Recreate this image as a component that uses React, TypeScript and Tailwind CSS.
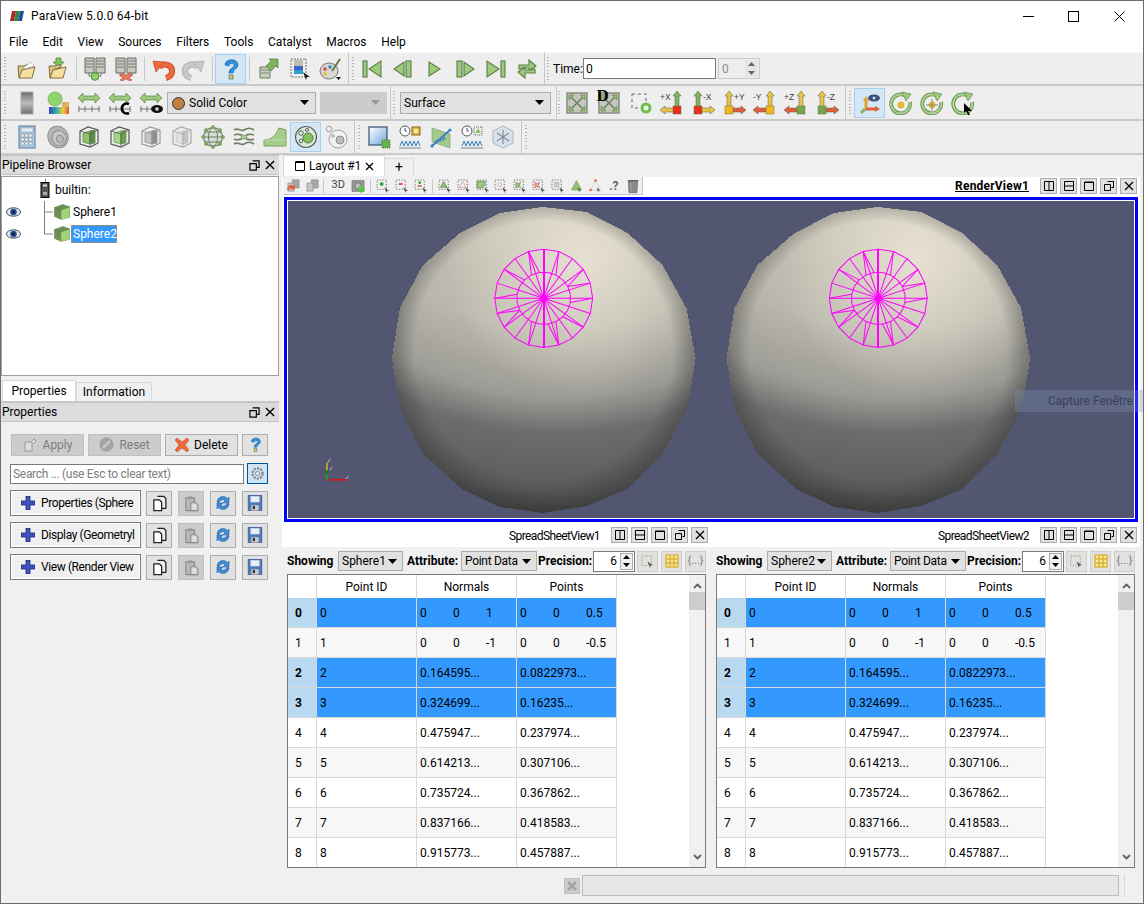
import React from 'react';

const G = '#9ccb80';
const GD = '#5e7d45';

const I = ({ s = 24, children }: { s?: number; children: React.ReactNode }) => (
  <svg width={s} height={s} viewBox="0 0 24 24" className="block shrink-0">{children}</svg>
);

const Folder = ({ down }: { down?: boolean }) => (
  <I>
    {down && <path d="M10 1h5v4h3l-5.500 5L7 5h3z" fill="#7fc25f" stroke="#4f8a38" strokeWidth="0.800" />}
    <path d="M3 9h6l2-1h4v2l-8 3-2 8H4z" fill="#d9c48a" stroke="#7d6a3a" />
    <path d="M7 13l13-3-3 11H4z" fill="#f7df9f" stroke="#86703c" />
    {!down && <path d="M8 11l8-6 3 4-9 3z" fill="#fff" stroke="#999" strokeWidth="0.600" />}
  </I>
);

const Servers = ({ bad }: { bad?: boolean }) => (
  <I>
    <path d="M2 1h9v15H2zM13 1h9v15h-9z" fill="#c9c9c2" stroke="#666" />
    <path d="M3 4h7M3 7h7M3 10h7M14 4h7M14 7h7M14 10h7" stroke="#787c70" strokeWidth="1.200" />
    <path d="M6 16v3h5M18 16v3h-5" stroke="#777" fill="none" />
    {bad ? (
      <path d="M8 16l4 2 4-2 2 2-3 3 3 2-2 1-4-2-4 2-2-1 3-2-3-3z" fill="#e9775b" stroke="#b04a30" strokeWidth="0.600" />
    ) : (
      <circle cx="12" cy="19.500" r="3.800" fill="#8fd46c" stroke="#4f8a38" />
    )}
  </I>
);

const Curl = ({ c, d, flip }: { c: string; d: string; flip?: boolean }) => (
  <I>
    <g transform={flip ? 'translate(24 0) scale(-1 1)' : ''}>
      <path d="M8 10c4-4 12-3 13 3 .5 4-2 7-6 8" fill="none" stroke={d} strokeWidth="6" />
      <path d="M8 10c4-4 12-3 13 3 .5 4-2 7-6 8" fill="none" stroke={c} strokeWidth="4.400" />
      <path d="M2 4l11 1-8 10z" fill={c} stroke={d} strokeWidth="0.700" />
    </g>
  </I>
);

const Help = ({ s = 24 }: { s?: number }) => (
  <I s={s}>
    <path d="M6 8c0-7 13-7 13 0 0 4-5 4-5 8h-4c0-5 5-5 5-8 0-2-5-2-5 1z" fill="#2f8fdc" stroke="#1b5f9c" strokeWidth="0.600" />
    <rect x="10" y="18" width="4" height="4" fill="#f4c430" stroke="#1b5f9c" strokeWidth="0.600" />
  </I>
);

const Extract = () => (
  <I>
    <path d="M4 10h10v11H4z" fill="#c8cfbf" stroke="#5f7f55" />
    <path d="M5 13h8M5 16h8" stroke="#7d8d75" />
    <path d="M10 9l5-5-2-2h9v9l-2-2-5 5z" fill="#7fb35f" stroke="#4f7a3a" strokeWidth="0.700" />
  </I>
);

const ColorMap = () => (
  <I>
    <rect x="4" y="2" width="15" height="18" fill="none" stroke="#777" strokeDasharray="2 1" />
    <rect x="7" y="3" width="9" height="6" fill="#bdbdb2" />
    <rect x="7" y="9" width="9" height="4" fill="#3a63c9" />
    <rect x="7" y="13" width="9" height="4" fill="#2f9fcf" />
    <path d="M16 15l7 5-3 0-1 3z" fill="#222" />
  </I>
);

const Palette = () => (
  <I>
    <ellipse cx="11" cy="14" rx="9" ry="8" fill="#d8d8d0" stroke="#777" />
    <circle cx="7" cy="12" r="1.800" fill="#e2453c" />
    <circle cx="12" cy="10" r="1.800" fill="#3d7fd9" />
    <circle cx="7" cy="17" r="1.800" fill="#e8c331" />
    <path d="M14 14L22 2" stroke="#5e7d45" strokeWidth="2" />
    <path d="M18 20h5l-2.500 3z" fill="#111" />
  </I>
);

const Vcr = ({ k }: { k: string }) => {
  const p = { fill: G, stroke: GD, strokeWidth: 1.100 };
  return (
    <I>
      {k === 'first' && (<><rect x="3" y="4" width="4" height="16" {...p} /><path d="M21 4v16L9 12z" {...p} /></>)}
      {k === 'prev' && (<><path d="M13 5v14L3 12z" {...p} /><rect x="15" y="4" width="5" height="16" {...p} /></>)}
      {k === 'play' && <path d="M7 5v14l11-7z" {...p} />}
      {k === 'next' && (<><rect x="4" y="4" width="5" height="16" {...p} /><path d="M11 5v14l10-7z" {...p} /></>)}
      {k === 'last' && (<><path d="M3 4v16l12-8z" {...p} /><rect x="17" y="4" width="4" height="16" {...p} /></>)}
      {k === 'loop' && (
        <>
          <path d="M4 12V8h10V3l7 6-7 5v-3H7v1z" {...p} />
          <path d="M20 12v4H10v5l-7-6 7-5v3h7v-1z" {...p} />
        </>
      )}
    </I>
  );
};

const GradBar = () => (
  <I>
    <defs>
      <linearGradient id="gb" x1="0" y1="0" x2="0" y2="1"><stop offset="0" stopColor="#6c6c6c" /><stop offset="0.500" stopColor="#bdbdbd" /><stop offset="1" stopColor="#6f6f6f" /></linearGradient>
    </defs>
    <rect x="6" y="1" width="12" height="22" fill="url(#gb)" stroke="#aaa" />
  </I>
);

const ColorBall = () => (
  <I>
    <defs>
      <linearGradient id="rb" x1="0" y1="0" x2="1" y2="0"><stop offset="0" stopColor="#3146c9" /><stop offset="0.400" stopColor="#3db4a0" /><stop offset="0.700" stopColor="#e8cf3a" /><stop offset="1" stopColor="#e2543a" /></linearGradient>
    </defs>
    <circle cx="9" cy="8" r="7" fill="#8fd46c" stroke="#5e9a45" strokeWidth="0.600" />
    <rect x="3" y="16" width="20" height="7" fill="url(#rb)" />
    <rect x="16" y="11" width="7" height="5" fill="#d9b45f" />
  </I>
);

const Rescale = ({ k }: { k?: 'c' | 'eye' }) => (
  <I>
    <path d="M1 7l5-5v3h12V2l5 5-5 5V9H6v3z" fill={G} stroke={GD} strokeWidth="0.700" />
    <path d="M1 18h22M2 15v6M8 15v6M15 15v6M22 15v6" stroke="#777" fill="none" />
    {k === 'c' && <path d="M21 13a5 5 0 1 0 0 9" fill="none" stroke="#000" strokeWidth="2.600" />}
    {k === 'eye' && (<><ellipse cx="18" cy="18" rx="6" ry="4" fill="#111" /><circle cx="18" cy="18" r="1.800" fill="#ddd" /></>)}
  </I>
);

const ResetCam = ({ d }: { d?: boolean }) => (
  <div className="relative">
    <I>
      <rect x="2" y="2" width="20" height="20" fill="#c5c6bd" stroke="#8a8a82" strokeWidth="1.500" />
      <path d="M6 6l12 12M18 6L6 18" stroke="#6e7f64" strokeWidth="1.500" />
      <path d="M4 4h5l-5 5zM20 4v5l-5-5zM4 20v-5l5 5zM20 20h-5l5-5z" fill="#8ec46f" stroke="#5e7d45" strokeWidth="0.600" />
    </I>
    {d && <span className="absolute left-[0px] top-[-5px] text-[17px] leading-[20px] font-bold text-black [font-family:'Liberation_Serif',serif]">D</span>}
  </div>
);

const ZoomBox = () => (
  <I>
    <rect x="3" y="3" width="14" height="14" fill="none" stroke="#666" strokeDasharray="3 3" />
    <circle cx="17" cy="17" r="5.500" fill="#6fc04f" />
    <circle cx="17" cy="17" r="2.500" fill="#e9f7e0" />
  </I>
);

const Ax = ({ l, left, v, h, sq }: { l: string; left: boolean; v: string; h: string; sq: string }) => {
  const x = left ? 7 : 17;
  return (
    <I>
      <path d={`M${x} 0l4 5h-2v11h-4V5h-2z`} fill={v} stroke="#5a5a40" strokeWidth="0.500" />
      {left
        ? <path d="M10 17h9v-2l5 4-5 4v-2h-9z" fill={h} stroke="#5a5a40" strokeWidth="0.500" />
        : <path d="M14 17H5v-2l-5 4 5 4v-2h9z" fill={h} stroke="#5a5a40" strokeWidth="0.500" />}
      <rect x={x - 4} y="15" width="8" height="8" fill={sq} stroke="#7a6a30" strokeWidth="0.500" />
      <text x={left ? 12 : 0} y="9" fontSize="8.500" fill="#444" fontFamily="'Liberation Sans',sans-serif">{l}</text>
    </I>
  );
};

const EyeAxis = () => (
  <I>
    <path d="M8 9v10" stroke="#d9a62e" strokeWidth="3" />
    <path d="M8 5l3 5H5z" fill="#d9a62e" />
    <path d="M8 18h10" stroke="#e0603c" strokeWidth="3" />
    <path d="M22 18l-5 3v-6z" fill="#e0603c" />
    <path d="M7 18l-4 4" stroke="#7fb35f" strokeWidth="3" />
    <ellipse cx="16" cy="7" rx="6" ry="3.500" fill="#37517a" />
    <circle cx="16" cy="7" r="1.500" fill="#cfd8e8" />
  </I>
);

const Rot = ({ k }: { k: 'dot' | 'cross' | 'cursor' }) => (
  <I>
    <path d="M17 5a9.500 9.500 0 1 0 4 6" fill="none" stroke="#6f9a55" strokeWidth="3.800" />
    <path d="M17 5a9.500 9.500 0 1 0 4 6" fill="none" stroke="#b4d6a0" strokeWidth="1.600" />
    <path d="M13 1l9 2-5 7z" fill="#9ccb80" stroke="#5e7d45" strokeWidth="0.600" />
    {k !== 'cursor' && <circle cx="12" cy="14" r="3" fill="#f0c020" stroke="#b08c20" strokeWidth="0.500" />}
    {k === 'cross' && <path d="M12 8v12M6 14h12" stroke="#8a8a60" />}
    {k === 'cursor' && <path d="M13 12l8 8h-4l2 4-2 0-2-4-2 2z" fill="#000" />}
  </I>
);

const Calc = () => (
  <I>
    <rect x="4" y="1" width="16" height="22" fill="#a9c9e6" stroke="#63788c" />
    <rect x="6" y="3" width="12" height="4" fill="#e7eff6" stroke="#7d8fa0" strokeWidth="0.500" />
    {[6, 10, 14].map(x => [9, 13, 17].map(y => <rect key={x + '-' + y} x={x} y={y} width="3" height="3" fill="#f4f4f4" stroke="#63788c" strokeWidth="0.400" />))}
  </I>
);

const Contour = () => (
  <I>
    <ellipse cx="12" cy="12" rx="10" ry="11" fill="#b5b5b5" stroke="#8f8f8f" transform="rotate(-25 12 12)" />
    <ellipse cx="13" cy="13" rx="7" ry="7.500" fill="#c9c9c9" stroke="#8f8f8f" transform="rotate(-25 13 13)" />
    <ellipse cx="14" cy="14" rx="3.500" ry="4" fill="#b5b5b5" stroke="#8f8f8f" transform="rotate(-25 14 14)" />
  </I>
);

const Cube = ({ fill, shade, line }: { fill: string; shade: string; line: string }) => (
  <I>
    <path d="M3 6l8-4 10 3v13l-8 4-10-3z" fill="none" stroke={line} strokeWidth="1.200" />
    <path d="M6 8l7-2v13l-7-2z" fill={fill} stroke={shade} strokeWidth="0.800" />
    <path d="M13 6l5-1v13l-5 1z" fill={shade} stroke={shade} strokeWidth="0.800" />
    <path d="M3 6l10 3 8-4M13 9v13" fill="none" stroke={line} strokeWidth="0.800" />
  </I>
);

const Glyph = () => (
  <I>
    <circle cx="12" cy="12" r="9.500" fill="#d3dfd6" stroke="#6e7f64" strokeWidth="1.200" />
    <ellipse cx="12" cy="12" rx="4.500" ry="9.500" fill="none" stroke="#6e7f64" />
    <path d="M2.500 12h19M4 7h16M4 17h16" stroke="#6e7f64" />
    {[[12, 2], [12, 22], [2, 12], [22, 12], [5, 5], [19, 5], [5, 19], [19, 19]].map(([x, y]) => <circle key={x + '_' + y} cx={x} cy={y} r="1.600" fill="#7fb35f" stroke="#4f7a3a" strokeWidth="0.400" />)}
  </I>
);

const Stream = () => (
  <I>
    <path d="M2 5c4-3 7 2 10 0s6-3 10 0M2 19c4-3 7 2 10 0s6-3 10 0" fill="none" stroke="#6e7f64" strokeWidth="1.600" />
    <path d="M2 10c4-2 6 0 8 0M14 10c2 0 4-2 8 0M2 14c4 2 6 0 8 0M14 14c2 0 4 2 8 0" fill="none" stroke="#6e7f64" strokeWidth="1.600" />
    <ellipse cx="12" cy="12" rx="3" ry="2" fill="#a8d18e" stroke="#5e7d45" strokeWidth="0.600" />
  </I>
);

const Warp = () => (
  <I>
    <path d="M1 15c8 0 12-5 15-12l7 2v16H1z" fill="#a5d089" stroke="#7a9b63" />
    <path d="M1 15h22" stroke="#c8d8bd" />
  </I>
);

const Group = () => (
  <I>
    <circle cx="12" cy="12" r="10.500" fill="#dfe8e0" stroke="#55635a" strokeWidth="1.200" />
    <circle cx="14" cy="13" r="5" fill="#84bf62" stroke="#4f7a3a" />
    <circle cx="7" cy="8" r="2.300" fill="none" stroke="#55635a" />
    <circle cx="7" cy="16" r="1.800" fill="none" stroke="#55635a" />
    <circle cx="13" cy="5" r="1.500" fill="none" stroke="#55635a" />
  </I>
);

const GroupOff = () => (
  <I>
    <circle cx="13" cy="14" r="9" fill="#f2f2f2" stroke="#a0a0a0" />
    <circle cx="15" cy="15" r="4" fill="#bdbdbd" stroke="#909090" />
    <circle cx="4" cy="4" r="2.800" fill="#f2f2f2" stroke="#a0a0a0" />
    <circle cx="8" cy="11" r="1.300" fill="none" stroke="#a0a0a0" />
  </I>
);

const BlueSel = () => (
  <I>
    <defs>
      <linearGradient id="bs" x1="0" y1="0" x2="1" y2="1"><stop offset="0" stopColor="#ffffff" /><stop offset="1" stopColor="#6ea5e0" /></linearGradient>
    </defs>
    <rect x="2" y="2" width="18" height="18" fill="url(#bs)" stroke="#3c5a7c" strokeWidth="1.300" />
    <rect x="15" y="15" width="8" height="8" fill="#67b347" stroke="#4f7a3a" strokeDasharray="1 1" />
  </I>
);

const Wave = () => <path d="M2 21l2-5 2 5 2-5 2 5 2-5 2 5 2-5 2 5 2-5 2 5" fill="none" stroke="#3c7fc4" strokeWidth="1" />;

const Clocky = ({ k }: { k: number }) => (
  <I>
    <circle cx="7" cy="6" r="5" fill="#fff" stroke="#555" />
    <path d="M7 3v3h2" stroke="#555" fill="none" />
    {k === 0 && (<><rect x="14" y="2" width="8" height="8" fill="#e2b93a" stroke="#866a20" /><rect x="16" y="4" width="4" height="4" fill="#f6e7a8" /></>)}
    {k === 1 && (<><rect x="14" y="2" width="8" height="8" fill="none" stroke="#666" strokeDasharray="1 1" /><path d="M18 3l3 5h-6z" fill="#8ec46f" /></>)}
    <path d="M1 23h22" stroke="#555" strokeWidth="0.700" />
    <Wave />
  </I>
);

const Probe = () => (
  <I>
    <path d="M3 3l18 6v14L3 17z" fill="#a4c98b" stroke="#7a9b63" strokeWidth="0.600" />
    <path d="M3 21L21 5" stroke="#3c7fc4" strokeWidth="2" />
    <path d="M6 15l2 3 1-4 2 3 1-4 2 3 1-4 2 3" stroke="#3c7fc4" fill="none" />
    <circle cx="3" cy="21" r="1.600" fill="#3c7fc4" />
    <circle cx="21" cy="5" r="1.600" fill="#3c7fc4" />
  </I>
);

const Hexa = () => (
  <I>
    <path d="M12 1l10 5v12l-10 5-10-5V6z" fill="#d6e1ea" stroke="#a9b6c2" />
    <path d="M12 5v14M6 8l12 8M18 8L6 16" stroke="#7f8d99" strokeWidth="1.200" />
  </I>
);

const TreeCube = () => (
  <I s={18}>
    <path d="M2 6l11-4 9 3v14l-11 3-9-4z" fill="#6d9152" stroke="#56763f" strokeWidth="0.600" />
    <path d="M11 9l11-4v14l-11 3z" fill="#a0d47a" />
    <path d="M2 6l9 3 11-4" fill="none" stroke="#56763f" strokeWidth="0.800" />
  </I>
);

const Eye = () => (
  <svg width="15" height="10" viewBox="0 0 15 10" className="block">
    <ellipse cx="7.500" cy="5" rx="7" ry="4.200" fill="#e8ecf2" stroke="#3c4a5c" />
    <circle cx="7.500" cy="5" r="3.300" fill="#27508c" />
    <circle cx="7.500" cy="5" r="1.400" fill="#0b1a33" />
  </svg>
);

const Grip = () => (
  <div className="w-[3px] h-[24px] flex flex-col justify-between shrink-0">
    {[0, 1, 2, 3, 4, 5, 6, 7].map(i => <div key={i} className="w-[2px] h-[1px] bg-[#b5b5b5]" />)}
  </div>
);

const Sep = () => <div className="w-[6px] flex justify-center shrink-0"><div className="w-px h-[24px] bg-[#c8c8c8]" /></div>;

const TB = ({ on, children }: { on?: boolean; children: React.ReactNode }) => (
  <div className={on ? 'w-[31px] h-[30px] flex items-center justify-center shrink-0 bg-[#d5e6f5] border border-[#a8d0f0]' : 'w-[31px] h-[30px] flex items-center justify-center shrink-0'}>
    {children}
  </div>
);

const Combo = ({ w, children, dis }: { w: string; children?: React.ReactNode; dis?: boolean }) => (
  <div className={`${w} h-[22px] shrink-0 flex items-center justify-between pl-[3px] pr-[6px] border ${dis ? 'bg-[#cccccc] border-[#cccccc]' : 'bg-[#e1e1e1] border-[#adadad]'}`}>
    <div className="flex items-center gap-[4px] text-[12px] pt-[1px]">{children}</div>
    <svg width="9" height="5" viewBox="0 0 9 5"><path d="M0 0h9L4.500 5z" fill={dis ? '#999' : '#000'} /></svg>
  </div>
);

const Toolbars = () => (
  <div className="bg-[#eeeeee] shrink-0">
    <div className="h-[34px] flex items-center pl-[3px] border-t border-[#f8f8f8] border-b-2 border-b-[#c9c9c9]">
      <Grip /><div className="w-[4px] shrink-0" />
      <TB><Folder /></TB><TB><Folder down /></TB>
      <Sep />
      <TB><Servers /></TB><TB><Servers bad /></TB>
      <Sep />
      <TB><Curl c="#ee6a3c" d="#c04a2c" /></TB><TB><Curl c="#c9c9c9" d="#a8a8a8" flip /></TB>
      <Sep />
      <TB on><Help /></TB>
      <Sep />
      <TB><Extract /></TB><TB><ColorMap /></TB><TB><Palette /></TB>
      <div className="w-[3px] shrink-0" />
      <div className="w-px h-[33px] bg-[#c8c8c8] shrink-0" />
      <div className="w-[3px] shrink-0" /><Grip /><div className="w-[1px] shrink-0" />
      {['first', 'prev', 'play', 'next', 'last', 'loop'].map(k => <TB key={k}><Vcr k={k} /></TB>)}
      <div className="w-[2px] shrink-0" />
      <div className="w-px h-[33px] bg-[#c8c8c8] shrink-0" />
      <div className="w-[2px] shrink-0" /><Grip />
      <span className="ml-[3px] pt-[1px] w-[30px] shrink-0 text-[12px] whitespace-nowrap">Time:</span>
      <div className="w-[133px] h-[21px] bg-white border border-[#7a7a7a] pl-[2px] text-[12px] leading-[20px] shrink-0">0</div>
      <div className="ml-[2px] w-[42px] h-[21px] border border-[#cccccc] flex items-center justify-between text-[12px] text-[#8c8c8c] pl-[3px] pr-[1px] shrink-0">
        0
        <div className="w-[13px] h-[17px] flex flex-col items-center justify-around bg-[#e6e6e6]">
          <svg width="7" height="4" viewBox="0 0 7 4"><path d="M0 4h7L3.500 0z" fill="#666" /></svg>
          <svg width="7" height="4" viewBox="0 0 7 4"><path d="M0 0h7L3.500 4z" fill="#666" /></svg>
        </div>
      </div>
    </div>
    <div className="h-[35px] flex items-center pl-[3px] border-b-2 border-b-[#c9c9c9]">
      <Grip /><div className="w-[4px] shrink-0" />
      <TB><GradBar /></TB><TB><ColorBall /></TB><TB><Rescale /></TB><TB><Rescale k="c" /></TB><TB><Rescale k="eye" /></TB>
      <div className="w-[1px] shrink-0" />
      <Combo w="w-[149px]">
        <span className="w-[13px] h-[13px] rounded-full bg-[#c0803f] border border-[#333] ml-[1px]" />
        <span>Solid Color</span>
      </Combo>
      <div className="w-[4px] shrink-0" />
      <Combo w="w-[67px]" dis />
      <div className="w-[3px] shrink-0" />
      <div className="w-px h-[33px] bg-[#c8c8c8] shrink-0" />
      <div className="w-[2px] shrink-0" /><Grip /><div className="w-[4px] shrink-0" />
      <Combo w="w-[151px]"><span>Surface</span></Combo>
      <div className="w-[5px] shrink-0" />
      <div className="w-px h-[33px] bg-[#c8c8c8] shrink-0" />
      <div className="w-[1px] shrink-0" /><Grip />
      <TB><ResetCam /></TB><div className="w-[1px] shrink-0" /><TB><ResetCam d /></TB><div className="w-[1px] shrink-0" /><TB><ZoomBox /></TB>
      <TB><Ax l="+X" left={false} v="#7fb35f" h="#e8c34a" sq="#e2321e" /></TB>
      <TB><Ax l="-X" left v="#7fb35f" h="#e8c34a" sq="#e2321e" /></TB>
      <TB><Ax l="+Y" left v="#e8c34a" h="#e0603c" sq="#f0b820" /></TB>
      <TB><Ax l="-Y" left={false} v="#e8c34a" h="#e0603c" sq="#f0b820" /></TB>
      <TB><Ax l="+Z" left={false} v="#e8c34a" h="#e0603c" sq="#6fa84f" /></TB>
      <TB><Ax l="-Z" left v="#e8c34a" h="#e0603c" sq="#6fa84f" /></TB>
      <div className="w-[3px] shrink-0" />
      <div className="w-px h-[33px] bg-[#c8c8c8] shrink-0" />
      <div className="w-[3px] shrink-0" /><Grip /><div className="w-[2px] shrink-0" />
      <TB on><EyeAxis /></TB><TB><Rot k="dot" /></TB><TB><Rot k="cross" /></TB><TB><Rot k="cursor" /></TB>
    </div>
    <div className="h-[34px] flex items-center pl-[3px] border-b-2 border-b-[#c9c9c9]">
      <Grip /><div className="w-[4px] shrink-0" />
      <TB><Calc /></TB><TB><Contour /></TB>
      <TB><Cube fill="#8ec46f" shade="#5e8f45" line="#555" /></TB>
      <TB><Cube fill="#a4d48a" shade="#6f9f55" line="#555" /></TB>
      <TB><Cube fill="#c4c4c4" shade="#8f8f8f" line="#999" /></TB>
      <TB><Cube fill="#e0e0e0" shade="#c4c4c4" line="#aaa" /></TB>
      <TB><Glyph /></TB><TB><Stream /></TB><TB><Warp /></TB>
      <TB on><Group /></TB><TB><GroupOff /></TB>
      <div className="w-[2px] shrink-0" />
      <div className="w-px h-[33px] bg-[#c8c8c8] shrink-0" />
      <div className="w-[3px] shrink-0" /><Grip /><div className="w-[2px] shrink-0" />
      <TB><BlueSel /></TB><TB><Clocky k={0} /></TB><TB><Probe /></TB><TB><Clocky k={1} /></TB><TB><Hexa /></TB>
      <div className="w-[3px] shrink-0" />
      <div className="w-px h-[33px] bg-[#c8c8c8] shrink-0" />
      <div className="w-[3px] shrink-0" /><Grip />
    </div>
  </div>
);

const DockHead = ({ label }: { label: string }) => (
  <div className="h-[20px] bg-[#dcdcdc] border-y border-[#c4c4c4] flex items-center justify-between pl-[1px] pr-[4px] text-[12px] shrink-0">
    <span>{label}</span>
    <div className="flex items-center gap-[5px]">
      <svg width="11" height="11" viewBox="0 0 12 12"><path d="M4 1h7v7H8M1 4h7v7H1z" fill="none" stroke="#000" strokeWidth="1.300" /></svg>
      <svg width="10" height="10" viewBox="0 0 11 11"><path d="M1 1l9 9M10 1l-9 9" stroke="#000" strokeWidth="1.500" /></svg>
    </div>
  </div>
);

const SmallBtn = ({ dis, children }: { dis?: boolean; children: React.ReactNode }) => (
  <div className={`w-[26px] h-[25px] flex items-center justify-center border shrink-0 ${dis ? 'bg-[#cccccc] border-[#bfbfbf]' : 'bg-[#e1e1e1] border-[#adadad]'}`}>{children}</div>
);

const CopyIco = () => (
  <I s={17}>
    <path d="M9 2h9l3 3v14h-7" fill="#eee" stroke="#222" strokeWidth="1.800" />
    <path d="M4 7h8l3 3v12H4z" fill="#fff" stroke="#222" strokeWidth="1.800" />
  </I>
);

const PasteIco = () => (
  <I s={17}>
    <path d="M4 4h12v18H4z" fill="#b8b8b8" stroke="#8a8a8a" strokeWidth="1.600" />
    <rect x="7" y="2" width="6" height="4" fill="#9a9a9a" />
    <path d="M11 11h7l3 3v8H11z" fill="#dcdcdc" stroke="#8a8a8a" strokeWidth="1.600" />
  </I>
);

const Refresh = () => (
  <I s={18}>
    <path d="M4 11a8 8 0 0 1 14-5l2-2v8h-8l3-3a5 5 0 0 0-8 2z" fill="#3f8fd6" stroke="#23609c" strokeWidth="0.800" />
    <path d="M20 13a8 8 0 0 1-14 5l-2 2v-8h8l-3 3a5 5 0 0 0 8-2z" fill="#3f8fd6" stroke="#23609c" strokeWidth="0.800" />
  </I>
);

const Save = () => (
  <I s={18}>
    <path d="M3 2h18v20H3z" fill="#4f7cb8" stroke="#2f568c" />
    <rect x="6" y="3" width="12" height="8" fill="#e8eef6" />
    <rect x="7" y="15" width="10" height="7" fill="#c9c9c9" />
    <rect x="9" y="16" width="3" height="4" fill="#333" />
  </I>
);

const SectionRow = ({ label }: { label: string }) => (
  <div className="flex items-center h-[26px] pl-[9px] shrink-0">
    <div className="w-[131px] h-[26px] border border-[#7a7a7a] bg-[#f0f0f0] shadow-[inset_0_0_0_1px_#ffffff] flex items-center pl-[10px] pr-[8px] text-[12px] shrink-0">
      <svg width="14" height="14" viewBox="0 0 14 14" className="shrink-0 mr-[6px]"><path d="M5 0h4v5h5v4H9v5H5V9H0V5h5z" fill="#3f51c0" stroke="#1d2a70" strokeWidth="0.800" /></svg>
      <span className="whitespace-nowrap tracking-[-0.4px]">{label}</span>
    </div>
    <div className="w-[5px] shrink-0" />
    <SmallBtn><CopyIco /></SmallBtn>
    <div className="w-[6px] shrink-0" />
    <SmallBtn dis><PasteIco /></SmallBtn>
    <div className="w-[6px] shrink-0" />
    <SmallBtn><Refresh /></SmallBtn>
    <div className="w-[6px] shrink-0" />
    <SmallBtn><Save /></SmallBtn>
  </div>
);

const Guide = ({ last }: { last?: boolean }) => (
  <svg width="9" height="22" viewBox="0 0 9 22" className="block shrink-0">
    <path d={last ? 'M.5 0v11h9' : 'M.5 0v22M.5 11h9'} stroke="#808080" fill="none" />
  </svg>
);

const LeftPanel = () => (
  <div className="w-[278px] flex flex-col shrink-0 text-[12px]">
    <DockHead label="Pipeline Browser" />
    <div className="h-[200px] mt-[1px] bg-white border border-[#a0a0a0] pt-[2px] shrink-0">
      <div className="h-[22px] flex items-center pl-[38px]">
        <svg width="11" height="22" viewBox="0 0 11 22" className="shrink-0">
          <path d="M5.500 0v4" stroke="#808080" />
          <rect x="1" y="3.500" width="8" height="15" fill="#555" stroke="#000" />
          <rect x="3" y="5.500" width="4" height="2" fill="#ddd" />
          <rect x="3" y="13" width="4" height="3" fill="#aaa" />
        </svg>
        <span className="ml-[4px]">builtin:</span>
      </div>
      <div className="h-[22px] flex items-center pl-[4px]">
        <div className="w-[38px] flex"><Eye /></div>
        <Guide />
        <TreeCube />
        <span className="ml-[1px] pl-[1px]">Sphere1</span>
      </div>
      <div className="h-[22px] flex items-center pl-[4px]">
        <div className="w-[38px] flex"><Eye /></div>
        <Guide last />
        <TreeCube />
        <span className="px-[1px] h-[18px] w-[46px] text-center leading-[16px] bg-[#3399ff] text-white border border-dotted border-[#e08020]">Sphere2</span>
      </div>
    </div>
    <div className="h-[26px] flex items-end pl-[1px] border-b border-[#c9c9c9] shrink-0">
      <div className="w-[74px] h-[21px] bg-white border border-b-0 border-[#d8d8d8] flex items-center justify-center">Properties</div>
      <div className="w-[76px] h-[19px] bg-[#f0f0f0] border border-b-0 border-[#d8d8d8] flex items-center justify-center">Information</div>
    </div>
    <DockHead label="Properties" />
    <div className="flex items-center gap-[4px] pl-[10px] mt-[11px] h-[23px] shrink-0">
      <div className="w-[73px] h-[22px] bg-[#cccccc] border border-[#bfbfbf] flex items-center justify-center gap-[5px] text-[#7d7d7d]">
        <svg width="15" height="15" viewBox="0 0 15 15"><path d="M2 5h7v9H2zM8 5l3-3 2 2-3 3" fill="#dedede" stroke="#9a9a9a" /></svg>Apply
      </div>
      <div className="w-[73px] h-[22px] bg-[#cccccc] border border-[#bfbfbf] flex items-center justify-center gap-[5px] text-[#7d7d7d]">
        <svg width="15" height="15" viewBox="0 0 15 15"><circle cx="7.500" cy="7.500" r="6.500" fill="#a6a6a6" stroke="#9a9a9a" /><path d="M4 11l7-7" stroke="#cfcfcf" strokeWidth="2" /></svg>Reset
      </div>
      <div className="w-[73px] h-[22px] bg-[#e1e1e1] border border-[#adadad] flex items-center justify-center gap-[5px]">
        <svg width="14" height="14" viewBox="0 0 14 14"><path d="M0 2l2-2 5 4 5-4 2 2-4 5 4 5-2 2-5-4-5 4-2-2 4-5z" fill="#ee6a3c" stroke="#c0472a" strokeWidth="0.500" /></svg>Delete
      </div>
      <div className="w-[26px] h-[22px] bg-[#e1e1e1] border border-[#adadad] flex items-center justify-center"><Help s={17} /></div>
    </div>
    <div className="flex items-center pl-[9px] mt-[7px] h-[21px] shrink-0">
      <div className="w-[234px] h-[20px] bg-white border border-[#7a7a7a] pl-[2px] leading-[19px] tracking-[-0.3px] text-[#7d7d7d]">Search ... (use Esc to clear text)</div>
      <div className="ml-[3px] w-[21px] h-[21px] bg-[#cce4f7] border border-[#005499] flex items-center justify-center">
        <svg width="15" height="15" viewBox="0 0 15 15"><circle cx="7.500" cy="7.500" r="5" fill="none" stroke="#8a8a8a" strokeWidth="2.500" strokeDasharray="2 1.200" /><circle cx="7.500" cy="7.500" r="2" fill="#f2f2f2" stroke="#8a8a8a" /></svg>
      </div>
    </div>
    <div className="flex flex-col gap-[6px] mt-[6px]">
      <SectionRow label="Properties (Sphere" />
      <SectionRow label="Display (Geometryl" />
      <SectionRow label="View (Render View" />
    </div>
  </div>
);

const MiniBtn = ({ k }: { k: string }) => (
  <div className="w-[17px] h-[16px] bg-[#e1e1e1] border border-[#adadad] flex items-center justify-center shrink-0">
    <svg width="10" height="10" viewBox="0 0 10 10">
      {k === 'h' && <path d="M.5.500h9v9h-9zM5 0v10" fill="none" stroke="#000" />}
      {k === 'v' && <path d="M.5.500h9v9h-9zM0 5h10" fill="none" stroke="#000" />}
      {k === 'm' && <path d="M.5 1h9v8.500h-9zM0 1.500h10" fill="none" stroke="#000" strokeWidth="1" />}
      {k === 'f' && <path d="M3.500.500h6v6h-2M.5 3.500h6v6h-6z" fill="none" stroke="#000" />}
      {k === 'x' && <path d="M1 1l8 8M9 1l-8 8" stroke="#000" strokeWidth="1.300" />}
    </svg>
  </div>
);

const ViewBtns = () => (
  <div className="flex gap-[3px]">
    {['h', 'v', 'm', 'f', 'x'].map(k => <MiniBtn key={k} k={k} />)}
  </div>
);

// tiny pick / select glyphs for the render view toolbar
const Pick = ({ t }: { t: number }) => (
  <I s={16}>
    <rect x="3" y="3" width="14" height="14" fill={t === 1 ? '#e6e6e6' : 'none'} stroke="#666" strokeDasharray="2 2" strokeWidth="1.300" />
    {t === 0 && <path d="M10 6v6M7 9h6" stroke="#1f9a2f" strokeWidth="2.400" />}
    {t === 2 && <path d="M7 9h6" stroke="#e0342a" strokeWidth="2.400" />}
    {t === 3 && (<><path d="M10 5v4M8 7h4" stroke="#1f9a2f" strokeWidth="2" /><path d="M7 12h6" stroke="#e0342a" strokeWidth="2" /></>)}
    {t === 4 && <path d="M10 5l5 9H5z" fill="#8ec46f" stroke="#5e7d45" />}
    {t === 5 && <path d="M10 5l5 9H5z" fill="none" stroke="#d88" />}
    {t === 6 && <path d="M3 5h12v6l-4 4H3z" fill="#9cc67f" stroke="#5e7d45" />}
    {t === 7 && <circle cx="10" cy="10" r="3" fill="none" stroke="#e07a6a" strokeDasharray="1.500 1.500" strokeWidth="1.500" />}
    {t === 8 && <path d="M6 6l3 3 4-3-2 5 2 3-5-1-2 2z" fill="#9cc67f" stroke="#4f7a3a" strokeWidth="0.800" />}
    {t === 9 && <path d="M6 6l3 3 4-3-2 5 2 3-5-1-2 2z" fill="#e8a4a0" stroke="#c04a40" strokeWidth="0.800" />}
    {t === 10 && <path d="M7 7h6v6H7z" fill="#ccd6c8" stroke="#9aa594" />}
    <path d="M14 14l7 5-3 .500-1 3z" fill="#555" />
  </I>
);

const RenderTools = () => (
  <div className="h-[18px] flex items-center bg-[#f0f0f0] border-r border-b border-[#c4c4c4] pl-[1px] w-[360px] shrink-0">
    {[0, 1].map(i => (
      <div key={i} className="w-[19px] flex justify-center">
        <I s={15}>
          <path d="M10 3h11v13H10z" fill="#a8a8a8" stroke="#888" />
          <path d="M3 8h10v13H3z" fill="#c4c4c4" stroke="#888" />
          {i === 0 && <path d="M2 19a7 7 0 0 1 10-7l2-2v8H6l3-3a4 4 0 0 0-4 4z" fill="#e0603c" />}
        </I>
      </div>
    ))}
    <div className="w-[5px] flex justify-center"><div className="w-px h-[14px] bg-[#c8c8c8]" /></div>
    <span className="w-[24px] text-center text-[11px] text-[#444]">3D</span>
    <div className="w-[17px] flex justify-center">
      <I s={16}><path d="M3 4h18v16H3z" fill="#9a9a9a" stroke="#666" /><circle cx="12" cy="12" r="5" fill="#bbb" stroke="#555" /><circle cx="17" cy="17" r="5" fill="#5fc04f" /></I>
    </div>
    <div className="w-[7px] flex justify-center"><div className="w-px h-[14px] bg-[#c8c8c8]" /></div>
    {[0, 2, 3].map(t => <div key={t} className="w-[19px] flex justify-center"><Pick t={t} /></div>)}
    <div className="w-[6px] flex justify-center"><div className="w-px h-[14px] bg-[#c8c8c8]" /></div>
    {[4, 5, 6, 7, 8, 9, 10].map(t => <div key={t} className="w-[19px] flex justify-center"><Pick t={t} /></div>)}
    <div className="w-[19px] flex justify-center">
      <I s={15}><path d="M12 4l8 15H4z" fill="#8ec46f" stroke="#6f9a55" /><path d="M14 15l6 5-3 0-1 3z" fill="#555" /></I>
    </div>
    <div className="w-[19px] flex justify-center">
      <I s={15}><path d="M12 4l8 15H4z" fill="none" stroke="#c4c4c4" /><circle cx="12" cy="4" r="2" fill="#e0603c" /><circle cx="4" cy="19" r="2" fill="#e0603c" /><path d="M14 15l6 5-3 0-1 3z" fill="#555" /></I>
    </div>
    <span className="w-[19px] text-center text-[12px] font-bold text-[#666]">.?</span>
    <div className="w-[19px] flex justify-center">
      <I s={16}><path d="M5 5h14l-1 17H6z" fill="#8a8a8a" stroke="#666" /><path d="M4 4h16" stroke="#666" strokeWidth="2" /><path d="M9 8v11" stroke="#bbb" /></I>
    </div>
  </div>
);

const silhouette = [[543, 207], [587, 212], [628, 233], [663, 265], [687, 308], [696, 358], [688, 408], [663, 453], [628, 488], [587, 505], [543, 512], [500, 506], [462, 488], [423, 453], [400, 408], [392, 358], [400, 308], [423, 265], [460, 233], [500, 213]];

const wirePts = () => {
  const cx = 544;
  const cy = 298;
  const out: [number, number][] = [];
  const mid: [number, number][] = [];
  for (let i = 0; i < 20; i++) {
    const a = (i * Math.PI) / 10 + Math.PI / 2;
    out.push([cx + 49 * Math.cos(a), cy - 49 * Math.sin(a)]);
    const b = ((i + 0.500) * Math.PI) / 10 + Math.PI / 2;
    mid.push([cx + 27 * Math.cos(b), cy - 26 * Math.sin(b)]);
  }
  return { cx, cy, out, mid };
};

const Wire = () => {
  const { cx, cy, out, mid } = wirePts();
  const outline = out.map(p => p.join(',')).join(' ');
  return (
    <g fill="none" stroke="#ff00ff" strokeWidth="1" shapeRendering="crispEdges">
      <polygon points={outline} />
      {out.map((p, i) => <line key={i} x1={cx} y1={cy} x2={p[0]} y2={p[1]} />)}
      {mid.map((p, i) => {
        const n = mid[(i + 1) % 20];
        const o = out[(i + 1) % 20];
        return (
          <g key={i}>
            <line x1={p[0]} y1={p[1]} x2={n[0]} y2={n[1]} />
            {i % 2 === 0 && <line x1={p[0]} y1={p[1]} x2={o[0]} y2={o[1]} />}
            {i % 5 === 1 && <line x1={p[0]} y1={p[1]} x2={out[i][0]} y2={out[i][1]} />}
          </g>
        );
      })}
      <line x1={cx} y1={cy - 49} x2={cx} y2={cy + 49} strokeWidth="2" />
      <circle cx={cx} cy={cy} r="3.500" fill="#ff00ff" stroke="none" shapeRendering="auto" />
    </g>
  );
};

const Ball = ({ dx }: { dx: number }) => {
  const pts = silhouette.map(p => p.join(',')).join(' ');
  return (
    <g transform={`translate(${dx} 0)`}>
      <polygon points={pts} fill="url(#base)" shapeRendering="crispEdges" />
      <polygon points={pts} fill="url(#lite)" />
      <polygon points={pts} fill="url(#rim)" />
      <Wire />
    </g>
  );
};

const RenderView = () => (
  <div className="h-[325px] mx-[2px] border-[3px] border-[#0000ff] bg-white p-px shrink-0">
    <svg width="100%" height="100%" viewBox="288 201 847 316" preserveAspectRatio="none" className="block bg-[#525671]">
      <defs>
        <radialGradient id="base" cx="0.550" cy="-0.500" r="1.500">
          <stop offset="0.330" stopColor="#c8c5b8" />
          <stop offset="0.600" stopColor="#bab8ad" />
          <stop offset="0.747" stopColor="#9c9b95" />
          <stop offset="0.827" stopColor="#6c6c6d" />
          <stop offset="0.953" stopColor="#5c5c5e" />
          <stop offset="1" stopColor="#464644" />
        </radialGradient>
        <radialGradient id="lite" cx="0.630" cy="0.170" r="0.450">
          <stop offset="0" stopColor="#f0e9da" stopOpacity="0.800" />
          <stop offset="1" stopColor="#f0e9da" stopOpacity="0" />
        </radialGradient>
        <radialGradient id="rim" cx="0.500" cy="0.470" r="0.530">
          <stop offset="0.800" stopColor="#333" stopOpacity="0" />
          <stop offset="1" stopColor="#333" stopOpacity="0.550" />
        </radialGradient>
      </defs>
      <Ball dx={0} />
      <Ball dx={335} />
      <path d="M327 479h20" stroke="#ff0000" strokeWidth="1.200" />
      <path d="M327 479v-8" stroke="#00c000" strokeWidth="1.200" />
      <path d="M327 471v-9" stroke="#e8d020" strokeWidth="1.200" />
      <circle cx="327" cy="471" r="1.600" fill="#008000" />
      <path d="M346 478l3-3M328 461l3-3M330 469l3-3" stroke="#fff" strokeWidth="1" strokeDasharray="1 1" />
    </svg>
  </div>
);

type Row = { h: string; n: string[]; p: string[]; sel?: boolean };

const rows: Row[] = [
  { h: '0', n: ['0', '0', '1'], p: ['0', '0', '0.5'], sel: true },
  { h: '1', n: ['0', '0', '-1'], p: ['0', '0', '-0.5'] },
  { h: '2', n: ['0.164595...'], p: ['0.0822973...'], sel: true },
  { h: '3', n: ['0.324699...'], p: ['0.16235...'], sel: true },
  { h: '4', n: ['0.475947...'], p: ['0.237974...'] },
  { h: '5', n: ['0.614213...'], p: ['0.307106...'] },
  { h: '6', n: ['0.735724...'], p: ['0.367862...'] },
  { h: '7', n: ['0.837166...'], p: ['0.418583...'] },
  { h: '8', n: ['0.915773...'], p: ['0.457887...'] },
];

const Triple = ({ v }: { v: string[] }) => (
  <div className="flex pl-[3px]">
    {v.map((t, i) => <span key={i} className={v.length > 1 ? 'w-[33px]' : 'whitespace-nowrap'}>{t}</span>)}
  </div>
);

const Sheet = ({ name, source }: { name: string; source: string }) => (
  <div className="w-[429px] flex flex-col shrink-0 text-[12px]">
    <div className="h-[25px] bg-white flex items-center justify-end gap-[11px] pr-[3px] shrink-0">
      <span className="mt-[2px] tracking-[-0.6px]">{name}</span>
      <ViewBtns />
    </div>
    <div className="h-[27px] flex items-center pl-[5px] pt-[1px] shrink-0">
      <span className="font-bold w-[51px] shrink-0">Showing</span>
      <div className="w-[65px] h-[20px] bg-[#e1e1e1] border border-[#adadad] flex items-center justify-between pl-[3px] pr-[5px] shrink-0">
        {source}<svg width="9" height="5" viewBox="0 0 9 5"><path d="M0 0h9L4.500 5z" fill="#000" /></svg>
      </div>
      <span className="font-bold ml-[4px] w-[54px] shrink-0 whitespace-nowrap">Attribute:</span>
      <div className="w-[76px] h-[20px] bg-[#e1e1e1] border border-[#adadad] flex items-center justify-between pl-[3px] pr-[5px] shrink-0 whitespace-nowrap tracking-[-0.3px]">
        Point Data<svg width="9" height="5" viewBox="0 0 9 5"><path d="M0 0h9L4.500 5z" fill="#000" /></svg>
      </div>
      <span className="font-bold ml-[1px] w-[55px] shrink-0 whitespace-nowrap">Precision:</span>
      <div className="w-[42px] h-[21px] bg-white border border-[#7a7a7a] flex items-center justify-end gap-[3px] pr-[1px] shrink-0">
        6
        <div className="w-[13px] h-[17px] flex flex-col bg-[#f0f0f0] border border-[#adadad] items-center justify-around">
          <svg width="7" height="4" viewBox="0 0 7 4"><path d="M0 4h7L3.500 0z" fill="#000" /></svg>
          <svg width="7" height="4" viewBox="0 0 7 4"><path d="M0 0h7L3.500 4z" fill="#000" /></svg>
        </div>
      </div>
      <div className="ml-[2px] w-[21px] h-[21px] bg-[#e1e1e1] border border-[#cfcfcf] flex items-center justify-center shrink-0">
        <I s={15}><rect x="3" y="3" width="15" height="15" fill="none" stroke="#7fb35f" strokeDasharray="2 2" strokeWidth="1.600" /><path d="M12 12l9 6-4 0-1 4z" fill="#555" /></I>
      </div>
      <div className="ml-[3px] w-[21px] h-[21px] bg-[#e1e1e1] border border-[#cfcfcf] flex items-center justify-center shrink-0">
        <I s={16}><path d="M3 3h18v18H3zM3 9h18M3 15h18M9 3v18M15 3v18" fill="#f5e6a0" stroke="#d4a610" strokeWidth="1.600" /></I>
      </div>
      <div className="ml-[3px] w-[21px] h-[21px] bg-[#e1e1e1] border border-[#cfcfcf] flex items-center justify-center shrink-0 text-[11px] text-[#7d7d7d] whitespace-nowrap">
        {'{...}'}
      </div>
    </div>
    <div className="h-[294px] ml-[5px] w-[419px] bg-white border border-[#7a7a7a] flex overflow-hidden shrink-0">
      <div className="flex-1 flex flex-col">
        <div className="h-[23px] flex shrink-0">
          <div className="w-[29px] border-r border-[#d8d8d8]" />
          {['Point ID', 'Normals', 'Points'].map(t => (
            <div key={t} className="w-[100px] pt-[1px] border-r border-[#d8d8d8] flex items-center justify-center">{t}</div>
          ))}
        </div>
        {rows.map((r, i) => {
          const cell = r.sel ? 'w-[100px] h-[30px] flex items-center bg-[#3399ff] border-r border-b border-[#d8d8d8]' : i % 2 === 1 ? 'w-[100px] h-[30px] flex items-center bg-[#f7f7f7] border-r border-b border-[#d8d8d8]' : 'w-[100px] h-[30px] flex items-center bg-white border-r border-b border-[#d8d8d8]';
          return (
            <div key={r.h} className="flex shrink-0">
              <div className={r.sel ? 'w-[29px] h-[30px] flex items-center pl-[7px] font-bold bg-[#b9d9f1] border-r border-b border-[#d8d8d8]' : i % 2 === 1 ? 'w-[29px] h-[30px] flex items-center pl-[7px] bg-[#f7f7f7] border-r border-b border-[#d8d8d8]' : 'w-[29px] h-[30px] flex items-center pl-[7px] bg-white border-r border-b border-[#d8d8d8]'}>{r.h}</div>
              <div className={cell}><Triple v={[r.h]} /></div>
              <div className={cell}><Triple v={r.n} /></div>
              <div className={cell}><Triple v={r.p} /></div>
            </div>
          );
        })}
      </div>
      <div className="w-[16px] bg-[#f0f0f0] flex flex-col items-center shrink-0">
        <svg width="9" height="6" viewBox="0 0 9 6" className="mt-[8px]"><path d="M1 5l3.500-3.500L8 5" fill="none" stroke="#606060" strokeWidth="1.800" /></svg>
        <div className="w-full h-[18px] bg-[#cdcdcd] mt-[3px]" />
        <div className="flex-1" />
        <svg width="9" height="6" viewBox="0 0 9 6" className="mb-[7px]"><path d="M1 1l3.500 3.500L8 1" fill="none" stroke="#606060" strokeWidth="1.800" /></svg>
      </div>
    </div>
  </div>
);

const RightPanel = () => (
  <div className="w-[858px] ml-[3px] flex flex-col shrink-0 text-[12px]">
    <div className="h-[22px] shrink-0">
      <div className="h-[21px] flex items-end pl-[1px]">
        <div className="w-[102px] h-[21px] bg-white border border-b-0 border-[#d8d8d8] flex items-center gap-[4px] pl-[11px] tracking-[-0.1px]">
          <svg width="10" height="10" viewBox="0 0 10 10"><path d="M.5.500h9v9h-9zM0 1.500h10" fill="none" stroke="#000" /></svg>
          <span>Layout #1</span>
          <svg width="9" height="9" viewBox="0 0 9 9"><path d="M1 1l7 7M8 1l-7 7" stroke="#000" strokeWidth="1.300" /></svg>
        </div>
        <div className="w-[29px] h-[18px] bg-[#f0f0f0] border border-l-0 border-b-0 border-[#d8d8d8] flex items-center justify-center text-[14px]">+</div>
      </div>
    </div>
    <div className="bg-white flex-1 flex flex-col min-h-0">
      <div className="h-[20px] flex items-start pl-[1px] pr-[3px] shrink-0">
        <RenderTools />
        <div className="flex-1 text-right font-bold underline pr-[11px] leading-[18px] tracking-[0.2px]">RenderView1</div>
        <div className="pt-[1px]"><ViewBtns /></div>
      </div>
      <RenderView />
      <div className="flex bg-[#f0f0f0] flex-1">
        <Sheet name="SpreadSheetView1" source="Sphere1" />
        <Sheet name="SpreadSheetView2" source="Sphere2" />
      </div>
    </div>
  </div>
);

export default function App() {
  return (
    <div className="relative w-[1144px] h-[904px] overflow-hidden bg-[#f0f0f0] border border-[#6d6d6d] flex flex-col text-black [font-family:'Roboto','Liberation_Sans',sans-serif]">
      <div className="h-[30px] bg-white flex items-center pl-[9px] shrink-0">
        <svg width="14" height="12" viewBox="0 0 14 12" className="shrink-0">
          <path d="M2 1h4L4 11H0z" fill="#b5242a" />
          <path d="M6 1h4L8 11H4z" fill="#2c8a3f" />
          <path d="M10 1h4l-2 10H8z" fill="#2a4a9c" />
        </svg>
        <span className="ml-[7px] text-[12px] tracking-[0.2px]">ParaView 5.0.0 64-bit</span>
        <div className="flex-1" />
        <svg width="11" height="11" viewBox="0 0 11 11" className="mr-[34px]"><path d="M0 5.500h11" stroke="#000" /></svg>
        <svg width="11" height="11" viewBox="0 0 11 11" className="mr-[35px]"><rect x=".5" y=".5" width="10" height="10" fill="none" stroke="#000" /></svg>
        <svg width="11" height="11" viewBox="0 0 11 11" className="mr-[18px]"><path d="M.5.500l10 10M10.500.500l-10 10" stroke="#000" /></svg>
      </div>
      <div className="h-[21px] bg-white flex items-center pl-[8px] gap-[14.7px] text-[12px] shrink-0">
        {['File', 'Edit', 'View', 'Sources', 'Filters', 'Tools', 'Catalyst', 'Macros', 'Help'].map(m => <span key={m}>{m}</span>)}
      </div>
      <Toolbars />
      <div className="flex flex-1 min-h-0">
        <LeftPanel />
        <RightPanel />
      </div>
      <div className="h-[35px] flex items-center shrink-0 relative">
        <div className="ml-[563px] w-[16px] h-[16px] bg-[#cccccc] border border-[#bfbfbf] flex items-center justify-center">
          <svg width="10" height="10" viewBox="0 0 10 10"><path d="M0 2l2-2 3 3 3-3 2 2-3 3 3 3-2 2-3-3-3 3-2-2 3-3z" fill="#a6a6a6" /></svg>
        </div>
        <div className="ml-[2px] w-[537px] h-[21px] bg-[#e6e6e6] border border-[#bcbcbc]" />
        <div className="ml-[5px] w-px h-[22px] bg-[#d8d8d8]" />
      </div>
      <div className="absolute right-[0px] top-[389px] w-[128px] h-[22px] bg-[#8296be]/30 flex items-center justify-end pr-[10px] text-[12px] text-[#3c4054]">Capture Fenêtre</div>
    </div>
  );
}
